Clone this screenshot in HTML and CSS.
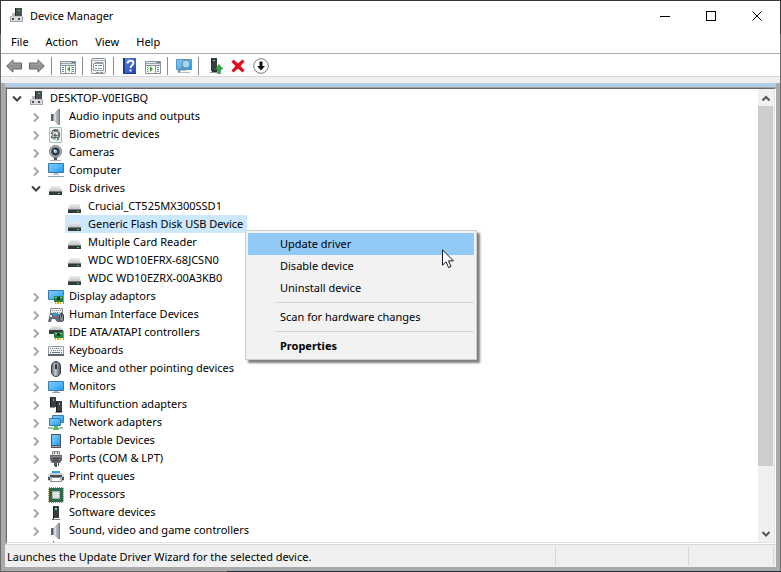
FILE: index.html
```html
<!DOCTYPE html>
<html lang="en">
<head>
<meta charset="utf-8">
<title>Device Manager</title>
<link rel="stylesheet" href="styles.css">
</head>
<body>
<svg class="sprite" aria-hidden="true">
  <defs>
    <linearGradient id="g-screen" x1="0" y1="0" x2="1" y2="1"><stop offset="0" stop-color="#7fcbff"/><stop offset=".5" stop-color="#55b8f8"/><stop offset="1" stop-color="#1d97f0"/></linearGradient>
    <linearGradient id="g-arrow" x1="0" y1="0" x2="0" y2="1"><stop offset="0" stop-color="#c4c4c4"/><stop offset=".5" stop-color="#8e8e8e"/><stop offset="1" stop-color="#a9a9a9"/></linearGradient>
    <linearGradient id="g-cone" x1="0" y1="0" x2="1" y2="0"><stop offset="0" stop-color="#d0d4d8"/><stop offset="1" stop-color="#8a9096"/></linearGradient>
    <linearGradient id="g-help" x1="0" y1="0" x2="1" y2="1"><stop offset="0" stop-color="#5b86e6"/><stop offset="1" stop-color="#1f43b5"/></linearGradient>
    <linearGradient id="g-mouse" x1="0" y1="0" x2="1" y2="0"><stop offset="0" stop-color="#5f656d"/><stop offset=".45" stop-color="#c4cad2"/><stop offset="1" stop-color="#4c525a"/></linearGradient>
    <linearGradient id="g-disk" x1="0" y1="0" x2="0" y2="1"><stop offset="0" stop-color="#eeeff0"/><stop offset="1" stop-color="#c2c5c7"/></linearGradient>
  </defs>
  <symbol id="i-pc" viewBox="0 0 16 16">
    <path fill="#4b5053" d="M6 0h7v9H6z"/><path fill="#25292b" d="M6 0h1v9H6z"/><path fill="#3fe04f" d="M9 2h2v1H9z"/>
    <path fill="#b6babd" d="M3 5h3v3H3z"/><path fill="#a6a6aa" d="M1 8h13v6H1z"/><path fill="#dcdce0" d="M2 8h11v5H2z"/><path fill="#c9c9ce" d="M1 8h13v1H1z"/>
    <path fill="#4d4f53" d="M3 10h2v2H3zM9 10h2v2H9z"/>
  </symbol>
  <symbol id="i-speaker" viewBox="0 0 16 16">
    <path fill="#59616a" d="M3 5h2v7H3z"/><path fill="#96a0aa" d="M5 5h2v7H5z"/><path fill="url(#g-cone)" d="M6 5l4-5h2v16h-2l-4-4z"/><path fill="#767c82" d="M11 0h1v16h-1z"/><path fill="#dfe3e6" d="M7 5h1v7H7z"/>
  </symbol>
  <symbol id="i-finger" viewBox="0 0 16 16">
    <path fill="#eef6f4" stroke="#9fc3bd" d="M1.500.5h12v15h-12z"/>
    <g fill="none" stroke="#4c5253" stroke-width=".9"><path d="M3.500 7c0-6 8-6 8 0 0 3-.5 4-1.500 6M5 12c-1-2-1-3-.5-5 1-4 6-3 6 0 0 3-.5 4-1.500 6.500M6 13c2-2 2.500-5 1.500-6S6 8 6.500 9 6 11 5.500 11M3.500 9v2M4.500 3.500h6M5.500 8.500h4M5 10.500h5"/></g>
  </symbol>
  <symbol id="i-camera" viewBox="0 0 16 16">
    <circle cx="7.500" cy="6.500" r="6" fill="#b9bcc0" stroke="#77797e"/><circle cx="7.500" cy="6.500" r="4" fill="#2e3238" stroke="#55585e"/><circle cx="7.500" cy="6.500" r="1.800" fill="#8cc6e8"/><circle cx="6.500" cy="5.500" r="1" fill="#f0f7fb"/>
    <path fill="#55585c" d="M6 12h3v3H6z"/><path fill="#a9aeb2" d="M2 15h11v1H2z"/>
  </symbol>
  <symbol id="i-computer" viewBox="0 0 16 16">
    <path fill="url(#g-screen)" stroke="#3c7aa8" d="M.5.5h15v9H.5z"/><path fill="#9fb6c6" d="M6 10h4v1H6z"/><path fill="#c4d4df" d="M4 11h8v1H4z"/><path fill="#8ba3b4" d="M0 13h16v1H0z"/>
  </symbol>
  <symbol id="i-monitor" viewBox="0 0 16 16">
    <path fill="url(#g-screen)" stroke="#3c7aa8" d="M.5 2.500h15v9H.5z"/><path fill="#aabfcd" d="M6 12h4v1H6z"/><path fill="#8ba3b4" d="M4 13h8v1H4z"/>
  </symbol>
  <symbol id="i-disk" viewBox="0 0 16 16">
    <path fill="url(#g-disk)" d="M3 5h9l2 5H1z"/><path fill="#34383a" d="M1 10h13v4H1z"/><path fill="#777b7e" d="M1 10h13v1H1z"/><path fill="#37e048" d="M10 12h2v1h-2z"/>
  </symbol>
  <symbol id="i-display" viewBox="0 0 16 16">
    <path fill="url(#g-screen)" stroke="#3c7aa8" d="M.5 1.500h15v9H.5z"/><path fill="#268046" d="M6 7h9v6H6z"/><path fill="#86d59b" d="M7 8h2v1H7zM12 8h2v1h-2z"/><path fill="#153f25" d="M9 8h3v3H9z"/><path fill="#8c989d" d="M15 6h1v9h-1z"/><path fill="#e6a91d" d="M7 13h6v2H7z"/><path fill="#fff0a0" d="M8 13h1v2H8zM11 13h1v2h-1z"/>
  </symbol>
  <symbol id="i-hid" viewBox="0 0 16 16">
    <path fill="#eef0f2" stroke="#878c93" d="M2.500 1.500h12v7h-12z"/><path stroke="#8b9097" stroke-dasharray="1 1" d="M4 3.500h10M5 5.500h9M4 7.500h9"/>
    <path fill="#646d78" d="M2 6h8l2 9h-3l-2-3H4l-1 3H0z"/><path fill="#2f97db" d="M5 6h4v3H5z"/><path fill="#e8eaec" d="M2 8h2v2H2z"/><path fill="#c9453b" d="M8 9h1v1H8z"/><rect x="11.500" y="6.500" width="4" height="8" rx="2" fill="#858d97" stroke="#343a42"/><path stroke="#31373f" d="M13.500 7v3"/>
  </symbol>
  <symbol id="i-ide" viewBox="0 0 16 16">
    <path fill="url(#g-disk)" d="M4 1h8l3 4H1z"/><path fill="#3a3e40" d="M1 5h14v4H1z"/><path fill="#268046" d="M6 7h9v6H6z"/><path fill="#86d59b" d="M7 8h2v1H7zM12 8h2v1h-2z"/><path fill="#153f25" d="M9 8h3v3H9z"/><path fill="#8c989d" d="M15 6h1v9h-1z"/><path fill="#e6a91d" d="M7 13h6v2H7z"/><path fill="#fff0a0" d="M8 13h1v2H8zM11 13h1v2h-1z"/>
  </symbol>
  <symbol id="i-keyboard" viewBox="0 0 16 16">
    <path fill="#f1f2f3" stroke="#9aa0a6" d="M.5 3.500h15v8H.5z"/><path fill="#5e646a" d="M0 11h16v2H0z"/><path stroke="#747a81" stroke-dasharray="1 1" d="M2 5.500h12M3 7.500h11"/><path stroke="#747a81" d="M2 9.500h1M4 9.500h8M13 9.500h1"/>
  </symbol>
  <symbol id="i-mouse" viewBox="0 0 16 16">
    <rect x="3.500" y=".5" width="9" height="15" rx="4.500" fill="url(#g-mouse)" stroke="#3c4249"/><path stroke="#30363c" d="M8 1v4"/><path stroke="#30363c" stroke-width="2" d="M8 4v4"/>
  </symbol>
  <symbol id="i-multi" viewBox="0 0 16 16">
    <path fill="#3a3e40" d="M2 0h6v10H2zM8 4h6v10H8z"/><path fill="#191c1e" d="M2 0h1v10H2zM8 4h1v10H8z"/><path fill="#8a8f93" d="M2 10h5v1H2zM7 15h7v1H7z"/><path fill="#191c1e" d="M8 14h6v1H8z"/><path fill="#3fe04f" d="M5 2h1v2H5zM11 6h1v2h-1z"/>
  </symbol>
  <symbol id="i-network" viewBox="0 0 16 16">
    <path fill="url(#g-screen)" stroke="#3c7aa8" d="M4.500.5h11v7h-11z"/><path fill="url(#g-screen)" stroke="#3c7aa8" d="M1.500 3.500h11v7h-11z"/><path fill="#54be5a" d="M6 11h4v2h1v2H5v-2h1z"/><path fill="#aeb8b0" d="M0 12h5v2H0zM11 12h4v2h-4z"/>
  </symbol>
  <symbol id="i-portable" viewBox="0 0 16 16">
    <path fill="#4b5560" d="M3 1h10v14H3z"/><path fill="url(#g-screen)" d="M4 2h8v10H4z"/><path fill="#c2cad0" d="M4 13h2v1H4zM7 13h2v1H7zM10 13h2v1h-2z"/>
  </symbol>
  <symbol id="i-ports" viewBox="0 0 16 16">
    <path fill="#e4e4e5" stroke="#88898c" d="M4.500.5h7v4h-7z"/><path stroke="#717276" d="M6.500 1v2M9.500 1v2"/><path fill="#66686b" d="M2 4h12v5l-2 3H4L2 9z"/><path fill="#8b8d90" d="M3 5h10v1H3z"/><path stroke="#3f4144" d="M5 7.500h6M5 9.500h6"/><path fill="#55575a" d="M6 12h1v3H6zM7 12h2v4H7zM10 12h1v3h-1z"/>
  </symbol>
  <symbol id="i-print" viewBox="0 0 16 16">
    <path fill="#2d97ec" d="M4 2h8v3H4z"/><path fill="#3bbf74" d="M7 2h3v1H7z"/><path fill="#c9ced3" d="M2 4h12l2 3v5H0V7z"/><path fill="#4a5057" d="M2 6h12v2H2zM0 8h2v3H0zM14 8h2v3h-2z"/><path fill="#fff" stroke="#83898f" d="M3.500 8.500h9l1 4h-11z"/>
  </symbol>
  <symbol id="i-cpu" viewBox="0 0 16 16">
    <path fill="none" stroke="#b29038" stroke-dasharray="1 1" d="M1 .5h14v15H.5V1"/><path fill="none" stroke="#b29038" stroke-dasharray="1 1" d="M15.500 1v14"/><path fill="#2f6a4d" d="M1 1h14v14H1z"/><path fill="#e0e1e0" stroke="#a9b6ae" d="M4.500 4.500h7v7h-7z"/>
  </symbol>
  <symbol id="i-software" viewBox="0 0 16 16">
    <path fill="#3a3e40" d="M5 1h6v12H5z"/><path fill="#202325" d="M5 1h1v13h5v1H5z"/><path fill="#4bf05c" d="M7 3h2v2H7z"/><path fill="#777c80" d="M4 14h8v1H4z"/>
  </symbol>
  <symbol id="i-storage" viewBox="0 0 16 16"><path fill="#4e5357" d="M5 0h1v1H5z"/></symbol>
  <symbol id="i-open" viewBox="0 0 16 16"><path fill="none" stroke="#404040" stroke-width="2" d="M4 5.500l4 4 4-4"/></symbol>
  <symbol id="i-closed" viewBox="0 0 16 16"><path fill="none" stroke="#a6a6a6" stroke-width="2" d="M6 4.500l4 4-4 4"/></symbol>
  <symbol id="i-back" viewBox="0 0 16 16"><path fill="url(#g-arrow)" stroke="#626262" d="M.7 8L7 1.800V5h8.500v6H7v3.200z"/></symbol>
  <symbol id="i-forward" viewBox="0 0 16 16"><path fill="url(#g-arrow)" stroke="#626262" d="M15.300 8L9 1.800V5H.5v6H9v3.200z"/></symbol>
  <symbol id="i-panel" viewBox="0 0 16 16">
    <path fill="#fff" stroke="#8b9299" d="M.5 3.500h15v12H.5z"/><path fill="#9ba3ac" d="M1 4h14v3H1z"/><path fill="#e5e8eb" d="M1 4h10v1H1zM1 6h14v1H1z"/><path fill="#58636f" d="M12 4h1v1h-1zM14 4h1v1h-1z"/><path fill="#8b9299" d="M5 7h1v8H5zM1 7h14v1H1z"/><path fill="#5885a9" d="M2 9h2v1H2zM2 11h2v1H2zM2 13h2v1H2zM12 9h2v1h-2zM12 11h2v1h-2zM12 13h2v1h-2z"/><path fill="#d7dadd" d="M11 8h1v7h-1z"/><path fill="#3da52c" d="M10 8v6L7 11z"/>
  </symbol>
  <symbol id="i-action" viewBox="0 0 16 16">
    <path fill="#fff" stroke="#8b9299" d="M.5 3.500h15v12H.5z"/><path fill="#9ba3ac" d="M1 4h14v3H1z"/><path fill="#e5e8eb" d="M1 4h10v1H1zM1 6h14v1H1z"/><path fill="#58636f" d="M12 4h1v1h-1zM14 4h1v1h-1z"/><path fill="#8b9299" d="M10 7h1v8h-1zM1 7h14v1H1z"/><path fill="#5885a9" d="M2 9h1v1H2zM2 11h1v1H2zM2 13h1v1H2zM12 9h2v1h-2zM12 11h2v1h-2zM12 13h2v1h-2z"/><path fill="#d7dadd" d="M3 8h1v7H3z"/><path fill="#3da52c" d="M5 8v6l3-3z"/>
  </symbol>
  <symbol id="i-props" viewBox="0 0 16 16">
    <rect x=".5" y=".5" width="14" height="15" rx="1" fill="#f2f3f4" stroke="#858c93"/><path fill="#aab1b8" d="M1 2h13v1H1z"/><path fill="#fff" stroke="#969da4" d="M2.500 5.500h10v7h-10z"/><path stroke="#969da4" d="M7.500 4v2M4 4.500h8"/><path fill="#5885a9" d="M4 7h2v1H4zM4 10h2v1H4z"/><path fill="#8b939b" d="M7 7h4v1H7zM7 10h4v1H7z"/><path fill="#8c949c" d="M5 14h3v1H5zM9 14h3v1H9z"/>
  </symbol>
  <symbol id="i-help" viewBox="0 0 16 16">
    <path fill="url(#g-help)" d="M1 0h13v16H1z"/><path fill="#1e3990" d="M1 0h2v16H1zM1 15h13v1H1z"/><path fill="none" stroke="#fff" stroke-width="2" d="M5.500 5.500C5.500 1.500 11.500 2 11.500 5c0 2-3 2.500-3 5"/><path fill="#fff" d="M7.500 11.500h2v2h-2z"/>
  </symbol>
  <symbol id="i-scan" viewBox="0 0 16 16">
    <path fill="url(#g-screen)" stroke="#5595bf" d="M.5 1.500h15v10H.5z"/><path fill="#a9bdca" d="M2 14h12v1H2zM6 12h4v1H6z"/><circle cx="10" cy="6" r="4" fill="#aeddf8" fill-opacity=".85" stroke="#75858f"/><path stroke="#6f8795" stroke-width="2" d="M7 9l-5 5"/>
  </symbol>
  <symbol id="i-update" viewBox="0 0 16 16">
    <path fill="#3a3e40" d="M4 0h6v13H4z"/><path fill="#202325" d="M4 0h1v14h5v-1H5z"/><path fill="#4bf05c" d="M6 2h2v1H6z"/><path fill="#969a9d" d="M3 14h7v1H3z"/><path fill="#30a746" stroke="#187b2c" stroke-width=".6" d="M12 6.500l4 4.500h-2.500v1h-3v-1H8zM10.500 12.500h3v1h-3zM10.500 14.500h3v1h-3z"/>
  </symbol>
  <symbol id="i-remove" viewBox="0 0 16 16"><path fill="#dc0e1c" d="M1.500 4l2-2.500L8 5.500l4.500-4 2 2L10.500 8l4 4.500-2 2L8 10.500l-4.500 4-2-2L5.500 8z"/></symbol>
  <symbol id="i-down" viewBox="0 0 16 16"><circle cx="8" cy="8" r="7.300" fill="#fff" stroke="#777"/><path fill="#111" d="M6.500 3.500h3V8H12l-4 4.500L4 8h2.500z"/></symbol>
</svg>

<main class="window">
  <header class="titlebar">
    <svg class="icon"><use href="#i-pc"/></svg>
    <h1 class="title">Device Manager</h1>
    <div class="captions">
      <button class="caption" aria-label="Minimise"><svg class="glyph" viewBox="0 0 11 11"><path d="M0 5.500h10"/></svg></button>
      <button class="caption" aria-label="Maximise"><svg class="glyph" viewBox="0 0 11 11"><path d="M.5.5h9v9h-9z"/></svg></button>
      <button class="caption" aria-label="Close"><svg class="glyph smooth" viewBox="0 0 11 11"><path d="M.5.5l9 9M9.500.5l-9 9"/></svg></button>
    </div>
  </header>

  <nav class="menubar">
    <button class="menu">File</button>
    <button class="menu">Action</button>
    <button class="menu">View</button>
    <button class="menu">Help</button>
  </nav>

  <div class="toolbar" role="toolbar">
    <button class="tool" aria-label="Back"><svg class="icon"><use href="#i-back"/></svg></button>
    <button class="tool" aria-label="Forward"><svg class="icon"><use href="#i-forward"/></svg></button>
    <span class="divider"></span>
    <button class="tool" aria-label="Show console tree"><svg class="icon"><use href="#i-panel"/></svg></button>
    <span class="divider"></span>
    <button class="tool" aria-label="Properties"><svg class="icon"><use href="#i-props"/></svg></button>
    <span class="divider"></span>
    <button class="tool" aria-label="Help"><svg class="icon"><use href="#i-help"/></svg></button>
    <button class="tool" aria-label="Show action pane"><svg class="icon"><use href="#i-action"/></svg></button>
    <span class="divider"></span>
    <button class="tool" aria-label="Scan for hardware changes"><svg class="icon"><use href="#i-scan"/></svg></button>
    <span class="divider"></span>
    <button class="tool" aria-label="Update driver"><svg class="icon"><use href="#i-update"/></svg></button>
    <button class="tool" aria-label="Uninstall device"><svg class="icon"><use href="#i-remove"/></svg></button>
    <button class="tool" aria-label="Disable device"><svg class="icon"><use href="#i-down"/></svg></button>
  </div>

  <div class="frame">
    <div class="pane">
      <div class="pane-inner">
        <ul class="tree" role="tree">
          <li class="row"><button class="twist" aria-label="Collapse"><svg class="icon"><use href="#i-open"/></svg></button><span class="item"><svg class="icon"><use href="#i-pc"/></svg>DESKTOP-V0EIGBQ</span></li>
          <li class="row l1"><button class="twist" aria-label="Expand"><svg class="icon"><use href="#i-closed"/></svg></button><span class="item"><svg class="icon"><use href="#i-speaker"/></svg>Audio inputs and outputs</span></li>
          <li class="row l1"><button class="twist" aria-label="Expand"><svg class="icon"><use href="#i-closed"/></svg></button><span class="item"><svg class="icon"><use href="#i-finger"/></svg>Biometric devices</span></li>
          <li class="row l1"><button class="twist" aria-label="Expand"><svg class="icon"><use href="#i-closed"/></svg></button><span class="item"><svg class="icon"><use href="#i-camera"/></svg>Cameras</span></li>
          <li class="row l1"><button class="twist" aria-label="Expand"><svg class="icon"><use href="#i-closed"/></svg></button><span class="item"><svg class="icon"><use href="#i-computer"/></svg>Computer</span></li>
          <li class="row l1"><button class="twist" aria-label="Collapse"><svg class="icon"><use href="#i-open"/></svg></button><span class="item"><svg class="icon"><use href="#i-disk"/></svg>Disk drives</span></li>
          <li class="row l2"><span class="item"><svg class="icon"><use href="#i-disk"/></svg>Crucial_CT525MX300SSD1</span></li>
          <li class="row l2"><span class="item selected"><svg class="icon"><use href="#i-disk"/></svg>Generic Flash Disk USB Device</span></li>
          <li class="row l2"><span class="item"><svg class="icon"><use href="#i-disk"/></svg>Multiple Card Reader</span></li>
          <li class="row l2"><span class="item"><svg class="icon"><use href="#i-disk"/></svg>WDC WD10EFRX-68JCSN0</span></li>
          <li class="row l2"><span class="item"><svg class="icon"><use href="#i-disk"/></svg>WDC WD10EZRX-00A3KB0</span></li>
          <li class="row l1"><button class="twist" aria-label="Expand"><svg class="icon"><use href="#i-closed"/></svg></button><span class="item"><svg class="icon"><use href="#i-display"/></svg>Display adaptors</span></li>
          <li class="row l1"><button class="twist" aria-label="Expand"><svg class="icon"><use href="#i-closed"/></svg></button><span class="item"><svg class="icon"><use href="#i-hid"/></svg>Human Interface Devices</span></li>
          <li class="row l1"><button class="twist" aria-label="Expand"><svg class="icon"><use href="#i-closed"/></svg></button><span class="item"><svg class="icon"><use href="#i-ide"/></svg>IDE ATA/ATAPI controllers</span></li>
          <li class="row l1"><button class="twist" aria-label="Expand"><svg class="icon"><use href="#i-closed"/></svg></button><span class="item"><svg class="icon"><use href="#i-keyboard"/></svg>Keyboards</span></li>
          <li class="row l1"><button class="twist" aria-label="Expand"><svg class="icon"><use href="#i-closed"/></svg></button><span class="item"><svg class="icon"><use href="#i-mouse"/></svg>Mice and other pointing devices</span></li>
          <li class="row l1"><button class="twist" aria-label="Expand"><svg class="icon"><use href="#i-closed"/></svg></button><span class="item"><svg class="icon"><use href="#i-monitor"/></svg>Monitors</span></li>
          <li class="row l1"><button class="twist" aria-label="Expand"><svg class="icon"><use href="#i-closed"/></svg></button><span class="item"><svg class="icon"><use href="#i-multi"/></svg>Multifunction adapters</span></li>
          <li class="row l1"><button class="twist" aria-label="Expand"><svg class="icon"><use href="#i-closed"/></svg></button><span class="item"><svg class="icon"><use href="#i-network"/></svg>Network adapters</span></li>
          <li class="row l1"><button class="twist" aria-label="Expand"><svg class="icon"><use href="#i-closed"/></svg></button><span class="item"><svg class="icon"><use href="#i-portable"/></svg>Portable Devices</span></li>
          <li class="row l1"><button class="twist" aria-label="Expand"><svg class="icon"><use href="#i-closed"/></svg></button><span class="item"><svg class="icon"><use href="#i-ports"/></svg>Ports (COM &amp; LPT)</span></li>
          <li class="row l1"><button class="twist" aria-label="Expand"><svg class="icon"><use href="#i-closed"/></svg></button><span class="item"><svg class="icon"><use href="#i-print"/></svg>Print queues</span></li>
          <li class="row l1"><button class="twist" aria-label="Expand"><svg class="icon"><use href="#i-closed"/></svg></button><span class="item"><svg class="icon"><use href="#i-cpu"/></svg>Processors</span></li>
          <li class="row l1"><button class="twist" aria-label="Expand"><svg class="icon"><use href="#i-closed"/></svg></button><span class="item"><svg class="icon"><use href="#i-software"/></svg>Software devices</span></li>
          <li class="row l1"><button class="twist" aria-label="Expand"><svg class="icon"><use href="#i-closed"/></svg></button><span class="item"><svg class="icon"><use href="#i-speaker"/></svg>Sound, video and game controllers</span></li>
          <li class="row l1" aria-hidden="true"><span class="twist"></span><span class="item"><svg class="icon"><use href="#i-storage"/></svg></span></li>
        </ul>
        <div class="scrollbar">
          <button class="scroll-btn" aria-label="Scroll up"><svg class="icon" viewBox="0 0 16 16"><path d="M4.500 10.500L8 7l3.500 3.500"/></svg></button>
          <div class="track"><div class="thumb"></div></div>
          <button class="scroll-btn" aria-label="Scroll down"><svg class="icon" viewBox="0 0 16 16"><path d="M4.500 6L8 9.500 11.500 6"/></svg></button>
        </div>
      </div>
    </div>
    <footer class="status">
      <p class="status-text">Launches the Update Driver Wizard for the selected device.</p>
      <span class="status-cell wide"></span>
      <span class="status-cell"></span>
    </footer>
  </div>
</main>

<div class="context" role="menu">
  <button class="option active" role="menuitem">Update driver</button>
  <button class="option" role="menuitem">Disable device</button>
  <button class="option" role="menuitem">Uninstall device</button>
  <hr class="rule">
  <button class="option" role="menuitem">Scan for hardware changes</button>
  <hr class="rule">
  <button class="option default" role="menuitem">Properties</button>
</div>
<svg class="cursor" viewBox="0 0 13 20" aria-hidden="true"><path fill="#fff" stroke="#1a1a2e" d="M.5.8v15.400l3.600-3.400 2.500 5.700 2.400-1-2.500-5.600h4.900z"/></svg>
</body>
</html>
```
FILE: styles.css
```css
* {
  box-sizing: border-box;
}

body {
  margin: 0;
  padding: 1px;
  height: 100vh;
  overflow: hidden;
  font: 11px/18px "Noto Sans", "Open Sans", sans-serif;
  color: #000;
  background:
    linear-gradient(#383838, #383838) 0 0 / 100% 1px no-repeat,
    linear-gradient(90deg, #666 227px, #1e2a38 227px) 0 100% / 100% 1px no-repeat,
    linear-gradient(#383838 34px, #6c6c6c 34px);
}

button {
  margin: 0;
  padding: 0;
  border: 0;
  background: none;
  color: inherit;
  font: inherit;
}

.sprite {
  position: absolute;
  width: 0;
  height: 0;
}

.icon {
  display: block;
  flex: none;
  width: 16px;
  height: 16px;
}

.window {
  display: flex;
  flex-direction: column;
  height: 100%;
  background: #fff;
}

.titlebar {
  display: flex;
  align-items: center;
  gap: 5px;
  height: 30px;
  padding-left: 8px;
}

.title {
  margin: 0;
  font-size: 11px;
  font-weight: 400;
}

.captions {
  display: flex;
  align-self: stretch;
  margin-left: auto;
}

.caption {
  display: grid;
  place-items: center;
  width: 46px;
}

.glyph {
  width: 11px;
  height: 11px;
  fill: none;
  stroke: #000;
  shape-rendering: crispEdges;
}

.smooth {
  shape-rendering: auto;
}

.menubar {
  display: flex;
  gap: 1px;
  height: 22px;
  padding-left: 2px;
}

.menu {
  padding: 0 8px;
}

.toolbar {
  display: flex;
  align-items: center;
  height: 24px;
  padding: 2px 0 0 1px;
  border-top: 1px solid #a9abb5;
  border-bottom: 1px solid #d7d7d7;
}

.tool {
  width: 23px;
  padding-left: 4px;
}

.divider {
  width: 8px;
  height: 18px;
  background: linear-gradient(#8c8c8c, #8c8c8c) 3px 0 / 1px 100% no-repeat;
}

.frame {
  display: flex;
  flex: 1;
  flex-direction: column;
  min-height: 0;
  padding: 0 4px 4px;
  border-top: 6px solid #f0f0f0;
  background: #aaa;
}

.pane {
  display: flex;
  flex: 1;
  flex-direction: column;
  min-height: 0;
  border-top: 4px solid #b4cee9;
}

.pane-inner {
  display: flex;
  flex: 1;
  min-height: 0;
  margin: 1px;
  border: 1px solid;
  border-color: #696969 #e3e3e3 #e3e3e3 #696969;
  background: #fff;
  box-shadow: -1px -1px 0 #a0a0a0, 1px 1px 0 #fff;
}

.tree {
  flex: 1;
  margin: 0;
  padding: 0 0 0 1px;
  overflow: hidden;
  list-style: none;
}

.row {
  display: flex;
  height: 18px;
}

.row .icon {
  margin-top: 2px;
}

.l1 {
  padding-left: 19px;
}

.l2 {
  padding-left: 57px;
}

.twist {
  display: flex;
  width: 19px;
  padding-left: 1px;
}

.item {
  display: flex;
  gap: 5px;
  padding: 0 4px 0 2px;
  white-space: nowrap;
}

.selected {
  background: #cce8ff;
}

.scrollbar {
  display: flex;
  flex-direction: column;
  width: 16px;
  background: #f0f0f0;
}

.scroll-btn {
  height: 17px;
  fill: none;
  stroke: #555;
  stroke-width: 2px;
}

.track {
  flex: 1;
}

.thumb {
  width: 15px;
  height: 86%;
  background: #cdcdcd;
}

.status {
  display: flex;
  height: 23px;
  padding: 1px 2px;
  border-top: 1px solid #d7d7d7;
  background: #f0f0f0;
}

.status-text {
  flex: 1;
  margin: 0;
  line-height: 22px;
}

.status-cell {
  width: 85px;
  border-right: 1px solid #d7d7d7;
}

.wide {
  width: 134px;
  border-left: 1px solid #d7d7d7;
}

.context {
  position: absolute;
  top: 230px;
  left: 245px;
  width: 232px;
  padding: 2px;
  border: 1px solid #ccc;
  background: #f2f2f2;
  box-shadow: 3px 3px 2px rgba(0, 0, 0, 0.5);
}

.option {
  display: block;
  width: 100%;
  height: 22px;
  padding-left: 32px;
  text-align: left;
}

.active {
  background: #91c9f7;
}

.default {
  font-weight: 700;
}

.rule {
  height: 1px;
  margin: 3px 0 3px 27px;
  border: 0;
  background: #d7d7d7;
}

.cursor {
  position: absolute;
  top: 249px;
  left: 442px;
  width: 13px;
  height: 20px;
}
```
